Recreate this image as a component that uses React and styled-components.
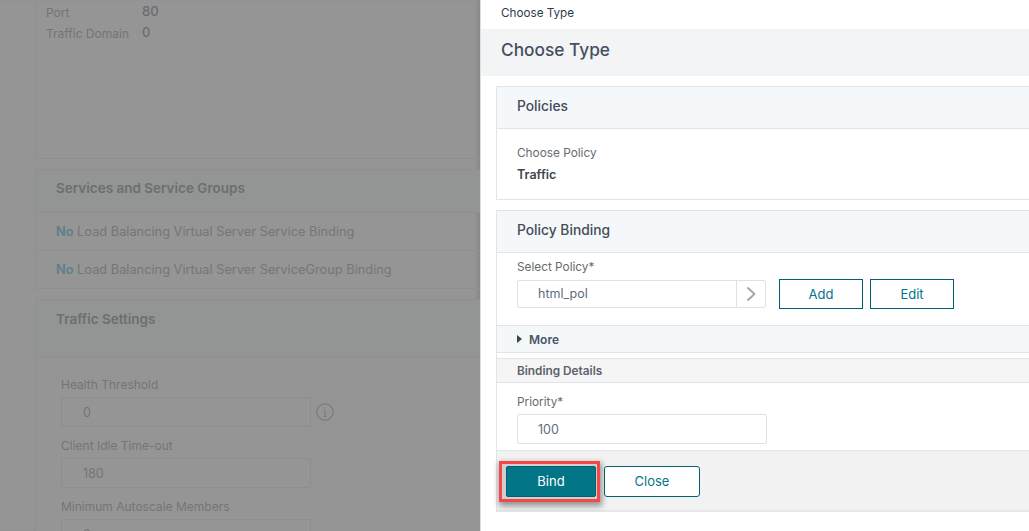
import React from "react";
import styled, { createGlobalStyle } from "styled-components";

const Global = createGlobalStyle`
  html, body { margin: 0; padding: 0; background: #fff; }
  body { font-family: Inter, "Liberation Sans", sans-serif; }
  * { box-sizing: border-box; }
`;

const Page = styled.div`
  display: flex;
  width: 1029px;
  height: 531px;
  overflow: hidden;
`;

/* dimmed page behind the panel */
const Backdrop = styled.div`
  width: 480px;
  height: 531px;
  flex: none;
  background: #959595;
  padding-left: 35px;
  overflow: hidden;
  box-shadow: inset -4px 0 4px -2px #868686;
`;

const DimCard = styled.section`
  border: 1px solid #8f8f8f;
  border-right: none;
  border-radius: 3px 0 0 3px;
  margin-bottom: 10px;
`;

const SummaryCard = styled(DimCard)`
  border-top: none;
  height: 159px;
  padding: 2px 0 0 10px;
`;

const SummaryRow = styled.div`
  display: grid;
  grid-template-columns: 96px 1fr;
  height: 21px;
  align-items: center;
`;

const SummaryLabel = styled.span`
  font-size: 12px;
  color: #747474;
`;

const SummaryValue = styled.span`
  font-size: 13px;
  font-weight: 500;
  color: #6a6c70;
  margin-top: -3px;
`;

const DimHeader = styled.h3`
  margin: 0;
  height: ${(p) => p.$h || "43px"};
  padding: ${(p) => p.$pad} 0 0 20px;
  background: #929594;
  border-bottom: 1px solid #8f8f8f;
  font-size: 13.5px;
  line-height: 17px;
  font-weight: 600;
  color: #6c6e70;
`;

const DimRow = styled.div`
  height: ${(p) => (p.$last ? "37px" : "38px")};
  padding: 11px 0 0 20px;
  font-size: 12.8px;
  line-height: 16px;
  color: #747678;
  border-bottom: ${(p) => (p.$last ? "none" : "1px solid #8f8f8f")};
`;

const DimNo = styled.b`
  font-weight: 600;
  color: #5a8088;
`;

const DimBody = styled.div`
  padding: 19px 0 0 25px;
  background: #949594;
`;

const DimLabel = styled.div`
  font-size: 12px;
  line-height: 16px;
  color: #757575;
  margin-bottom: 4px;
`;

const DimFieldRow = styled.div`
  display: flex;
  align-items: center;
  gap: 5px;
  margin-bottom: 11px;
`;

const DimInput = styled.div`
  width: 250px;
  height: 30px;
  padding-left: 21px;
  border: 1px solid #8d8d8d;
  border-radius: 2px;
  font-size: 12.5px;
  line-height: 29px;
  color: #747678;
`;

/* side panel */
const Panel = styled.div`
  flex: 1;
  min-width: 0;
  height: 531px;
  background: #fff;
  border-left: 1px solid #dedede;
  display: flex;
  flex-direction: column;
`;

const Crumb = styled.div`
  height: 29px;
  padding: 6px 0 0 20px;
  font-size: 11.7px;
  line-height: 15px;
  color: #2f3a4c;
`;

const TitleBar = styled.h1`
  margin: 0;
  height: 47px;
  padding-left: 20px;
  background: #f3f4f6;
  font-size: 17.3px;
  line-height: 41px;
  font-weight: 500;
  color: #454f63;
`;

const Body = styled.div`
  padding: 10px 0 0 15px;
`;

const Card = styled.section`
  border: 1px solid #e1e5ea;
  border-right: none;
  border-bottom: ${(p) => (p.$open ? "none" : "1px solid #e1e5ea")};
  margin-bottom: 10px;
`;

const CardHead = styled.h2`
  margin: 0;
  height: 42px;
  padding-left: 20px;
  background: #f5f8fb;
  border-bottom: 1px solid #e1e5ea;
  font-size: 13.8px;
  line-height: 38px;
  font-weight: 500;
  color: #444c56;
`;

const StaticBody = styled.div`
  height: 70px;
  padding: 17px 0 0 20px;
`;

const FieldLabel = styled.div`
  font-size: 11.8px;
  line-height: 15px;
  color: #666b70;
`;

const StaticValue = styled.div`
  margin-top: 6px;
  font-size: 12.5px;
  line-height: 16px;
  font-weight: 600;
  color: #3f4650;
`;

const SelectArea = styled.div`
  height: 72px;
  padding: 7px 0 0 20px;
`;

const ControlRow = styled.div`
  display: flex;
  align-items: center;
  margin-top: 4px;
`;

const SelectBox = styled.div`
  width: 249px;
  height: 28px;
  display: flex;
  border: 1px solid #dfe1e4;
  border-radius: 2px;
  margin-right: 13px;
`;

const SelectValue = styled.div`
  flex: 1;
  padding-left: 20px;
  font-size: 12.5px;
  line-height: 26px;
  color: #5f6b80;
`;

const SelectArrow = styled.div`
  width: 29px;
  border-left: 1px solid #dfe1e4;
  display: flex;
  align-items: center;
  justify-content: center;
`;

const OutlineButton = styled.button`
  width: ${(p) => p.$w};
  height: ${(p) => p.$h};
  margin-right: 7px;
  padding: 0;
  background: #fff;
  border: 1px solid #02606f;
  border-radius: ${(p) => p.$r || "0"};
  font-family: inherit;
  font-size: 13px;
  color: #027586;
`;

const MoreBar = styled.div`
  height: 28px;
  padding-left: 20px;
  background: #f5f8f9;
  border-top: 1px solid #e1e5ea;
  border-bottom: 1px solid #e1e5ea;
  display: flex;
  align-items: center;
  gap: 7px;
  font-size: 12px;
  font-weight: 600;
  color: #4a5568;
`;

const Caret = styled.span`
  width: 0;
  height: 0;
  border-left: 5px solid #3c4450;
  border-top: 4.5px solid transparent;
  border-bottom: 4.5px solid transparent;
`;

const DetailsBar = styled.div`
  height: 25px;
  margin-top: 5px;
  padding-left: 20px;
  background: #f5f5f5;
  border-top: 1px solid #e1e5ea;
  border-bottom: 1px solid #e1e5ea;
  font-size: 11.8px;
  line-height: 24px;
  font-weight: 600;
  color: #5b626c;
`;

const PriorityArea = styled.div`
  height: 67px;
  padding: 12px 0 0 20px;
`;

const PriorityInput = styled.div`
  width: 250px;
  height: 30px;
  margin-top: 4px;
  padding-left: 20px;
  border: 1px solid #dfe1e4;
  border-radius: 2px;
  font-size: 12.5px;
  line-height: 29px;
  color: #5f6b80;
`;

const Footer = styled.div`
  height: 62px;
  padding: 10px 0 0 2px;
  background: #f2f2f2;
  border-top: 1px solid #e1e5ea;
  border-bottom: 2px solid #e4e7ea;
  display: flex;
  align-items: flex-start;
  gap: 4px;
`;

const HighlightFrame = styled.div`
  width: 101px;
  height: 41px;
  padding: 2px 1px 2px 4px;
  border: 3px solid #f44848;
  background: #cfcfcf;
  box-shadow: 1px 3px 6px 1px rgba(0, 0, 0, 0.4);
`;

const PrimaryButton = styled.button`
  display: block;
  width: 90px;
  height: 31px;
  padding: 0 0 2px;
  background: #027586;
  border: 1px solid #02606f;
  border-radius: 2px;
  font-family: inherit;
  font-size: 13px;
  color: #fff;
`;

const CloseButton = styled(OutlineButton)`
  margin-top: 5px;
  padding-bottom: 2px;
`;

export default function App() {
  return (
    <Page>
      <Global />
      <Backdrop>
        <SummaryCard>
          <SummaryRow>
            <SummaryLabel>Port</SummaryLabel>
            <SummaryValue>80</SummaryValue>
          </SummaryRow>
          <SummaryRow>
            <SummaryLabel>Traffic Domain</SummaryLabel>
            <SummaryValue>0</SummaryValue>
          </SummaryRow>
        </SummaryCard>
        <DimCard>
          <DimHeader $pad="10px">Services and Service Groups</DimHeader>
          <DimRow>
            <DimNo>No</DimNo> Load Balancing Virtual Server Service Binding
          </DimRow>
          <DimRow $last>
            <DimNo>No</DimNo> Load Balancing Virtual Server ServiceGroup Binding
          </DimRow>
        </DimCard>
        <DimCard>
          <DimHeader $h="58px" $pad="11px">Traffic Settings</DimHeader>
          <DimBody>
            <DimLabel>Health Threshold</DimLabel>
            <DimFieldRow>
              <DimInput>0</DimInput>
              <svg width="18" height="18" viewBox="0 0 18 18" fill="none" stroke="#7c7c7c" strokeWidth="1.2">
                <circle cx="9" cy="9" r="8.2" />
                <path d="M9 7.5v6M7.6 7.5H9M7.6 13.5h2.8" />
                <circle cx="9" cy="5" r="0.7" fill="#7c7c7c" stroke="none" />
              </svg>
            </DimFieldRow>
            <DimLabel>Client Idle Time-out</DimLabel>
            <DimFieldRow>
              <DimInput>180</DimInput>
            </DimFieldRow>
            <DimLabel>Minimum Autoscale Members</DimLabel>
            <DimFieldRow>
              <DimInput>0</DimInput>
            </DimFieldRow>
          </DimBody>
        </DimCard>
      </Backdrop>
      <Panel>
        <Crumb>Choose Type</Crumb>
        <TitleBar>Choose Type</TitleBar>
        <Body>
          <Card>
            <CardHead>Policies</CardHead>
            <StaticBody>
              <FieldLabel>Choose Policy</FieldLabel>
              <StaticValue>Traffic</StaticValue>
            </StaticBody>
          </Card>
          <Card $open>
            <CardHead>Policy Binding</CardHead>
            <SelectArea>
              <FieldLabel>Select Policy*</FieldLabel>
              <ControlRow>
                <SelectBox>
                  <SelectValue>html_pol</SelectValue>
                  <SelectArrow>
                    <svg width="10" height="16" viewBox="0 0 10 16" fill="none" stroke="#a0a3a6" strokeWidth="1.8">
                      <path d="M1.5 1.5 8.5 8 1.5 14.5" />
                    </svg>
                  </SelectArrow>
                </SelectBox>
                <OutlineButton $w="84px" $h="30px">Add</OutlineButton>
                <OutlineButton $w="84px" $h="30px">Edit</OutlineButton>
              </ControlRow>
            </SelectArea>
            <MoreBar>
              <Caret />
              More
            </MoreBar>
            <DetailsBar>Binding Details</DetailsBar>
            <PriorityArea>
              <FieldLabel>Priority*</FieldLabel>
              <PriorityInput>100</PriorityInput>
            </PriorityArea>
            <Footer>
              <HighlightFrame>
                <PrimaryButton>Bind</PrimaryButton>
              </HighlightFrame>
              <CloseButton $w="96px" $h="31px" $r="3px">Close</CloseButton>
            </Footer>
          </Card>
        </Body>
      </Panel>
    </Page>
  );
}
